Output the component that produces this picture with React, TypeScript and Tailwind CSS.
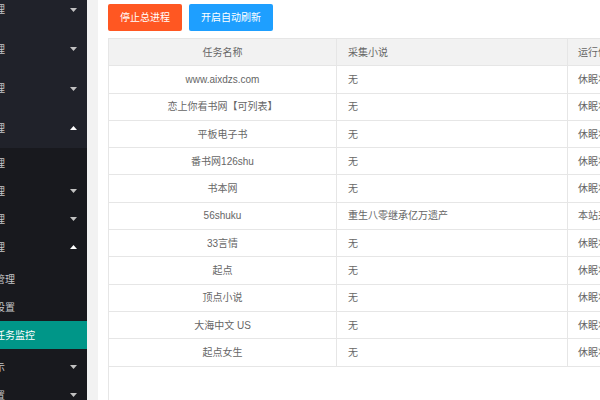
import React from "react";

type NavItem = {
  label: string;
  level: 1 | 2 | 3;
  arrow?: "up" | "down";
  active?: boolean;
  indent?: string;
};

const topItems: NavItem[] = [
  { label: "小说管理", level: 1, arrow: "down" },
  { label: "用户管理", level: 1, arrow: "down" },
  { label: "系统管理", level: 1, arrow: "down" },
  { label: "采集管理", level: 1, arrow: "up" },
];

const subItems: NavItem[] = [
  { label: "节点管理", level: 2 },
  { label: "规则管理", level: 2, arrow: "down" },
  { label: "书源管理", level: 2, arrow: "down" },
  { label: "任务管理", level: 2, arrow: "up" },
];

const thirdItems: NavItem[] = [
  { label: "采集管理", level: 3, indent: "ml-[-25px]" },
  { label: "采集设置", level: 3, indent: "ml-[-25px]" },
  { label: "任务监控", level: 3, active: true, indent: "ml-[-5px]" },
];

const tailItems: NavItem[] = [
  { label: "采集演示", level: 2, arrow: "down" },
  { label: "采集设置", level: 2, arrow: "down" },
];

const rows = [
  ["www.aixdzs.com", "无", "休眠状态中"],
  ["恋上你看书网【可列表】", "无", "休眠状态中"],
  ["平板电子书", "无", "休眠状态中"],
  ["番书网126shu", "无", "休眠状态中"],
  ["书本网", "无", "休眠状态中"],
  ["56shuku", "重生八零继承亿万遗产", "本站采集中"],
  ["33言情", "无", "休眠状态中"],
  ["起点", "无", "休眠状态中"],
  ["顶点小说", "无", "休眠状态中"],
  ["大海中文 US", "无", "休眠状态中"],
  ["起点女生", "无", "休眠状态中"],
];

function Arrow({ dir }: { dir: "up" | "down" }) {
  return (
    <svg width="7" height="4" viewBox="0 0 7 4" className="shrink-0">
      {dir === "down" ? (
        <polygon points="0,0 7,0 3.5,4" fill="#c2c2c2" />
      ) : (
        <polygon points="0,4 7,4 3.5,0" fill="#ffffff" />
      )}
    </svg>
  );
}

function NavRow({ item, height }: { item: NavItem; height: string }) {
  return (
    <div
      className={`flex items-center justify-between pr-[10px] ${height} ${
        item.active ? "bg-[#009688] text-white" : "text-[#c4c5c8]"
      }`}
    >
      {item.level === 3 ? (
        <span className={`whitespace-nowrap ${item.indent}`}>{item.label}</span>
      ) : (
        <div className="flex w-[5px] justify-end">
          <span className="whitespace-nowrap">{item.label}</span>
        </div>
      )}
      {item.arrow && <Arrow dir={item.arrow} />}
    </div>
  );
}

export default function App() {
  return (
    <div
      className="flex h-[400px] w-[600px] overflow-hidden bg-[#f2f2f2] text-[10px]"
      style={{ fontFamily: '"Liberation Sans", "Noto Sans CJK SC", sans-serif' }}
    >
      <aside className="flex w-[87px] shrink-0 flex-col overflow-hidden bg-[#20222a]">
        <div className="mt-[-10px]">
          {topItems.map((it) => (
            <NavRow key={it.label} item={it} height="h-[39.5px]" />
          ))}
        </div>
        <div className="flex-1 bg-[#18191e] pt-px">
          {subItems.map((it) => (
            <NavRow key={it.label} item={it} height="h-[28px]" />
          ))}
          <div className="py-[4px]">
            {thirdItems.map((it) => (
              <NavRow key={it.label} item={it} height="h-[28px]" />
            ))}
          </div>
          {tailItems.map((it) => (
            <NavRow key={it.label} item={it} height="h-[28px]" />
          ))}
        </div>
      </aside>

      <main className="ml-[11px] flex min-w-0 flex-1 flex-col bg-white pl-[10px] pt-[4px]">
        <div className="flex gap-[7px]">
          <button className="h-[27px] rounded-[2px] bg-[#ff5722] px-[12px] text-white">
            停止总进程
          </button>
          <button className="h-[27px] rounded-[2px] bg-[#1e9fff] px-[12px] text-white">
            开启自动刷新
          </button>
        </div>

        <div className="mt-[7px] w-[720px] flex-1 border-l border-t border-[#e6e6e6] text-[#666]">
          <div className="grid h-[27.3px] grid-cols-[228px_231px_1fr] border-b border-[#e6e6e6] bg-[#f2f2f2]">
            <div className="flex items-center justify-center border-r border-[#e6e6e6]">
              任务名称
            </div>
            <div className="flex items-center border-r border-[#e6e6e6] px-[11px]">
              采集小说
            </div>
            <div className="flex items-center px-[10px]">运行信息</div>
          </div>
          {rows.map((r) => (
            <div
              key={r[0]}
              className="grid h-[27.3px] grid-cols-[228px_231px_1fr] border-b border-[#e6e6e6]"
            >
              <div className="flex items-center justify-center border-r border-[#e6e6e6]">
                {r[0]}
              </div>
              <div className="flex items-center border-r border-[#e6e6e6] px-[11px]">
                {r[1]}
              </div>
              <div className="flex items-center px-[10px]">{r[2]}</div>
            </div>
          ))}
        </div>
      </main>
    </div>
  );
}
